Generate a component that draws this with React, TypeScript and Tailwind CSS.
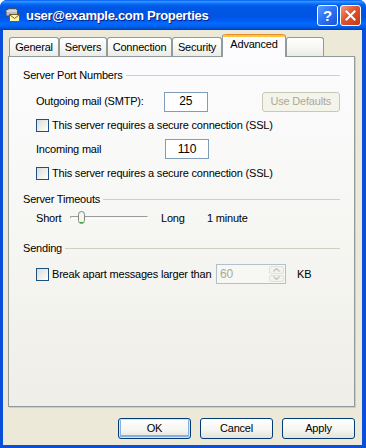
import React from "react";

const ui = "font-['Tahoma','Liberation_Sans',sans-serif] text-[11px] leading-[13px] tracking-[-0.2px] text-black";

function TitleIcon() {
  return (
    <svg width="17" height="16" viewBox="0 0 17 16">
      <path d="M2 3.5 L5 1.5 H12 L13.5 3.5 V9 H2 Z" fill="#B9BCC4" stroke="#4A4F5C" strokeWidth="1" />
      <path d="M2.5 4 H13" stroke="#EEF0F4" strokeWidth="1" />
      <rect x="5.5" y="7.5" width="10" height="7" fill="#FFF4A8" stroke="#6B5D24" strokeWidth="1" />
      <path d="M5.5 7.5 L10.5 11.5 L15.5 7.5" fill="none" stroke="#6B5D24" strokeWidth="1" />
    </svg>
  );
}

function Group({ title }: { title: string }) {
  return (
    <div className="flex h-[14px] items-center gap-[3px]">
      <span className="whitespace-nowrap">{title}</span>
      <div className="h-px flex-1 bg-[#D0D0BF]" />
    </div>
  );
}

function Check() {
  return (
    <span className="block h-[13px] w-[13px] shrink-0 border border-[#1C5180] bg-[linear-gradient(135deg,#DCDCD7_0%,#F4F4F1_70%,#FFFFFF_100%)]" />
  );
}

function NumBox({ value }: { value: string }) {
  return (
    <div className="flex h-[20px] w-[44px] items-center justify-center border border-[#7F9DB9] bg-white text-[12px]">
      {value}
    </div>
  );
}

function Slider() {
  return (
    <svg width="80" height="14" viewBox="0 0 80 14">
      <path d="M0.5 7 V5.5 H77.5" fill="none" stroke="#9D9C99" strokeWidth="1" />
      <path d="M1 7.5 H78" stroke="#FFFFFF" strokeWidth="1" />
      <rect x="8.5" y="0.5" width="6" height="12" rx="3" fill="#F5F5F1" stroke="#7C8A78" strokeWidth="1" />
      <path d="M10 11.5 H13" stroke="#3AA43A" strokeWidth="1" />
    </svg>
  );
}

function SpinBox() {
  return (
    <div className="flex h-[20px] w-[70px] items-center border border-[#AFC0CF] bg-[#F7F7F4] pl-[3px] pr-[1px] text-[12px] text-[#ACA899]">
      <span className="flex-1">60</span>
      <div className="flex h-[16px] w-[15px] flex-col gap-px">
        <div className="flex flex-1 items-center justify-center rounded-[2px] border border-[#E2E1D8] bg-[#F3F3EE]">
          <svg width="7" height="4" viewBox="0 0 7 4">
            <path d="M0.5 3.5 L3.5 0.5 L6.5 3.5" fill="none" stroke="#C3C2BA" strokeWidth="1.2" />
          </svg>
        </div>
        <div className="flex flex-1 items-center justify-center rounded-[2px] border border-[#E2E1D8] bg-[#F3F3EE]">
          <svg width="7" height="4" viewBox="0 0 7 4">
            <path d="M0.5 0.5 L3.5 3.5 L6.5 0.5" fill="none" stroke="#C3C2BA" strokeWidth="1.2" />
          </svg>
        </div>
      </div>
    </div>
  );
}

function XpButton({ label, primary }: { label: string; primary?: boolean }) {
  return (
    <button
      className={
        primary
          ? "h-[21px] w-[73px] rounded-[3px] border border-[#003C74] bg-[linear-gradient(180deg,#FFFFFF_0%,#F4F4F0_60%,#E3E2DA_100%)] shadow-[inset_0_0_0_1px_#CEE7FF,inset_0_-1px_0_2px_#89ADE4] text-black"
          : "h-[21px] w-[73px] rounded-[3px] border border-[#003C74] bg-[linear-gradient(180deg,#FFFFFF_0%,#F4F4F0_60%,#E3E2DA_100%)] text-black"
      }
    >
      {label}
    </button>
  );
}

const tabs = [
  { label: "General", w: "w-[50px]" },
  { label: "Servers", w: "w-[48px]" },
  { label: "Connection", w: "w-[65px]" },
  { label: "Security", w: "w-[50px]" },
];

export default function App() {
  return (
    <div className={`${ui} flex h-[448px] w-[366px] flex-col overflow-hidden rounded-t-[7px] bg-[#0A4FDA]`}>
      {/* title bar */}
      <div className="flex h-[30px] shrink-0 items-center bg-[linear-gradient(180deg,#0058EE_0%,#3593FF_5%,#127DFF_10%,#0262EE_16%,#0057E5_24%,#0054E3_56%,#005BF5_68%,#026AFE_78%,#0062EF_88%,#0052D6_94%,#0040AB_100%)] pl-[4px] pr-[5px]">
        <TitleIcon />
        <span className="ml-[5px] flex-1 font-['Trebuchet_MS','Liberation_Sans',sans-serif] text-[13px] font-bold tracking-[-0.3px] text-white [text-shadow:1px_1px_0_#0A1E80]">
          user@example.com Properties
        </span>
        <div className="flex h-[21px] w-[21px] items-center justify-center rounded-[3px] border border-white bg-[linear-gradient(135deg,#5A9BFF_0%,#2C6FF0_50%,#1A55D8_100%)] text-[15px] font-bold text-white">
          ?
        </div>
        <div className="ml-[2px] flex h-[21px] w-[21px] items-center justify-center rounded-[3px] border border-white bg-[linear-gradient(135deg,#EE9A80_0%,#E0532E_45%,#C33915_100%)]">
          <svg width="11" height="11" viewBox="0 0 11 11">
            <path d="M1.5 1.5 L9.5 9.5 M9.5 1.5 L1.5 9.5" stroke="#FFFFFF" strokeWidth="2" strokeLinecap="square" />
          </svg>
        </div>
      </div>

      {/* body */}
      <div className="mb-[3px] ml-[3px] mr-[4px] flex flex-1 flex-col bg-[#ECE9D8] pt-[4px]">
        {/* tab strip */}
        <div className="ml-[6px] flex h-[22px] items-end">
          {tabs.map((t) => (
            <div
              key={t.label}
              className={`${t.w} flex h-[19px] items-center justify-center rounded-t-[3px] border border-b-0 border-[#919B9C] bg-[linear-gradient(180deg,#FFFFFF_0%,#F7F7F4_50%,#ECEBE6_100%)]`}
            >
              {t.label}
            </div>
          ))}
          <div className="relative z-10 -mb-px flex h-[23px] w-[64px] flex-col rounded-t-[3px] border-x border-[#919B9C] bg-[#FCFCFE]">
            <div className="h-[3px] rounded-t-[3px] border-t border-[#E68B2C] bg-[#FFC73C]" />
            <div className="flex flex-1 items-start justify-center pt-[1px]">Advanced</div>
          </div>
          <div className="flex h-[19px] w-[38px] rounded-t-[3px] border border-b-0 border-[#919B9C] bg-[linear-gradient(180deg,#FFFFFF_0%,#F7F7F4_50%,#ECEBE6_100%)]" />
        </div>

        {/* panel */}
        <div className="ml-[5px] h-[351px] w-[347px] border border-[#919B9C] bg-[linear-gradient(180deg,#FCFCFE_0%,#F6F6F3_50%,#EFEEE8_100%)] px-[14px] pt-[11px] shadow-[1px_1px_0_#D0CEBF]">
          <Group title="Server Port Numbers" />
          <div className="ml-[13px] mt-[9px] flex h-[21px] items-center">
            <span className="w-[129px]">Outgoing mail (SMTP):</span>
            <NumBox value="25" />
            <div className="ml-[54px] flex h-[20px] w-[79px] items-center justify-center rounded-[3px] border border-[#C9C7BA] bg-[#F5F4EA] text-[#ACA899]">
              Use Defaults
            </div>
          </div>
          <div className="ml-[13px] mt-[7px] flex h-[13px] items-center gap-[2px]">
            <Check />
            <span className="ml-px whitespace-nowrap">This server requires a secure connection (SSL)</span>
          </div>
          <div className="ml-[13px] mt-[7px] flex h-[20px] items-center">
            <span className="w-[129px]">Incoming mail</span>
            <NumBox value="110" />
          </div>
          <div className="ml-[13px] mt-[8px] flex h-[13px] items-center gap-[2px]">
            <Check />
            <span className="ml-px whitespace-nowrap">This server requires a secure connection (SSL)</span>
          </div>

          <div className="mt-[12px]">
            <Group title="Server Timeouts" />
          </div>
          <div className="ml-[13px] mt-[5px] flex h-[14px] items-center">
            <span className="w-[34px]">Short</span>
            <Slider />
            <span className="ml-[11px] w-[46px]">Long</span>
            <span>1 minute</span>
          </div>

          <div className="mt-[16px]">
            <Group title="Sending" />
          </div>
          <div className="ml-[13px] mt-[9px] flex h-[20px] items-center">
            <Check />
            <span className="ml-[3px] w-[164px] whitespace-nowrap">Break apart messages larger than</span>
            <SpinBox />
            <span className="ml-[11px]">KB</span>
          </div>
        </div>

        {/* buttons */}
        <div className="mr-[7px] mt-[11px] flex justify-end gap-[9px]">
          <XpButton label="OK" primary />
          <XpButton label="Cancel" />
          <XpButton label="Apply" />
        </div>
      </div>
    </div>
  );
}
